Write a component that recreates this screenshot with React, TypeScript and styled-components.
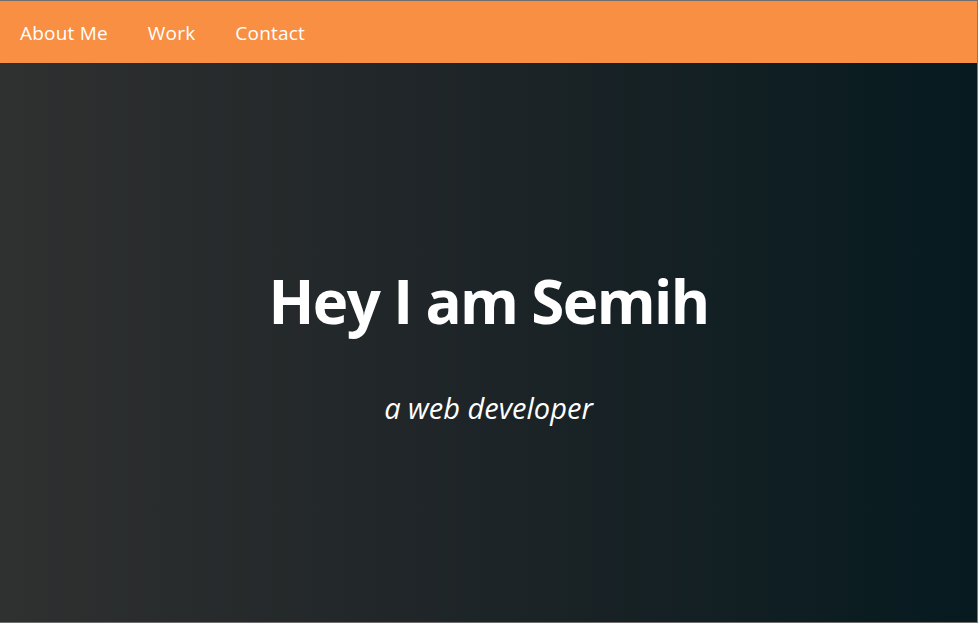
import React from "react";
import styled, { createGlobalStyle } from "styled-components";

const Global = createGlobalStyle`
  html, body { margin: 0; padding: 0; height: 100%; }
  body { font-family: "Open Sans", "Noto Sans", sans-serif; background: #2e2f2f; }
  #root { height: 100%; }
`;

const Page = styled.div`
  height: 623px;
  box-sizing: border-box;
  display: flex;
  flex-direction: column;
  border-top: 1px solid #6e6e6e;
  border-bottom: 1px solid #6e6e6e;
  border-right: 1px solid #7a7a7a;
`;

const Nav = styled.nav`
  height: 62px;
  flex: 0 0 62px;
  background: #f88f42;
  display: flex;
  align-items: center;
`;

const NavLink = styled.a`
  color: #ffffff;
  font-size: 19px;
  letter-spacing: 0.2px;
  padding: 0 20px;
  text-decoration: none;
  line-height: 1;
  margin-top: 3px;
`;

const Hero = styled.main`
  flex: 1;
  background: linear-gradient(to right, #2f3030 0%, #1d2427 50%, #061a1f 100%);
  display: flex;
  flex-direction: column;
  align-items: center;
  justify-content: center;
  color: #ffffff;
  padding-top: 8px;
`;

const Title = styled.h1`
  margin: 0;
  font-size: 60px;
  font-weight: 700;
  line-height: 1;
  letter-spacing: -1.6px;
`;

const Subtitle = styled.p`
  margin: 62px 0 0 0;
  font-size: 29px;
  font-style: italic;
  line-height: 1;
`;

export default function App() {
  return (
    <>
      <Global />
      <Page>
        <Nav>
          <NavLink href="#about">About Me</NavLink>
          <NavLink href="#work">Work</NavLink>
          <NavLink href="#contact">Contact</NavLink>
        </Nav>
        <Hero>
          <Title>Hey I am Semih</Title>
          <Subtitle>a web developer</Subtitle>
        </Hero>
      </Page>
    </>
  );
}
